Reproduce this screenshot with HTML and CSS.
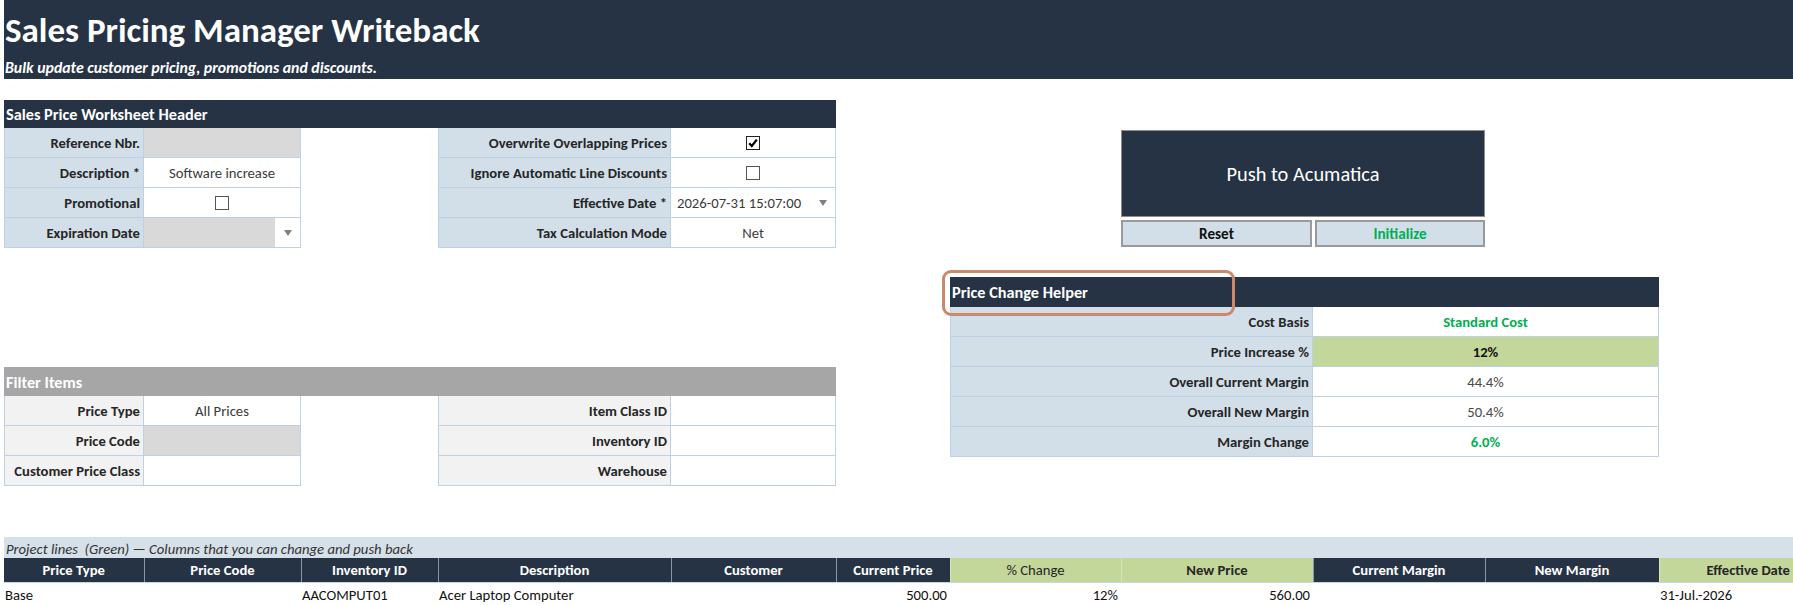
FILE: index.html
```html
<!DOCTYPE html>
<html lang="en">
<head>
<meta charset="UTF-8">
<title>Sales Pricing Manager Writeback</title>
<link rel="stylesheet" href="styles.css">
</head>
<body>
<div class="banner">
    <h1>Sales Pricing Manager Writeback</h1>
    <p>Bulk update customer pricing, promotions and discounts.</p>
</div>

<div class="main">
    <div class="left">
        <div class="section">
            <div class="bar">Sales Price Worksheet Header</div>
            <div class="form">
                <div class="lbl">Reference Nbr.</div>
                <div class="val grey"></div>
                <div class="gap"></div>
                <div class="lbl">Overwrite Overlapping Prices</div>
                <div class="val">
                    <svg class="chk" width="14" height="14" viewBox="0 0 14 14"><rect x="0.5" y="0.5" width="13" height="13" fill="#fff" stroke="#222"/><path d="M3.2 7.2 L5.8 10 L10.8 3.6" fill="none" stroke="#000" stroke-width="2.2"/></svg>
                </div>

                <div class="lbl">Description *</div>
                <div class="val">Software increase</div>
                <div class="gap"></div>
                <div class="lbl">Ignore Automatic Line Discounts</div>
                <div class="val">
                    <svg class="chk" width="14" height="14" viewBox="0 0 14 14"><rect x="0.5" y="0.5" width="13" height="13" fill="#fff" stroke="#555"/></svg>
                </div>

                <div class="lbl">Promotional</div>
                <div class="val">
                    <svg class="chk" width="14" height="14" viewBox="0 0 14 14"><rect x="0.5" y="0.5" width="13" height="13" fill="#fff" stroke="#555"/></svg>
                </div>
                <div class="gap"></div>
                <div class="lbl">Effective Date *</div>
                <div class="val picker">
                    <span class="pick-text">2026-07-31 15:07:00</span>
                    <span class="drop"><i class="arrow"></i></span>
                </div>

                <div class="lbl">Expiration Date</div>
                <div class="val picker">
                    <span class="pick-text grey"></span>
                    <span class="drop"><i class="arrow"></i></span>
                </div>
                <div class="gap"></div>
                <div class="lbl">Tax Calculation Mode</div>
                <div class="val">Net</div>
            </div>
        </div>

        <div class="section filter">
            <div class="bar">Filter Items</div>
            <div class="form">
                <div class="lbl">Price Type</div>
                <div class="val">All Prices</div>
                <div class="gap"></div>
                <div class="lbl">Item Class ID</div>
                <div class="val"></div>

                <div class="lbl">Price Code</div>
                <div class="val grey"></div>
                <div class="gap"></div>
                <div class="lbl">Inventory ID</div>
                <div class="val"></div>

                <div class="lbl">Customer Price Class</div>
                <div class="val"></div>
                <div class="gap"></div>
                <div class="lbl">Warehouse</div>
                <div class="val"></div>
            </div>
        </div>
    </div>

    <div class="right">
        <div class="actions">
            <div class="push">Push to Acumatica</div>
            <div class="btn-row">
                <div class="btn reset">Reset</div>
                <div class="btn init">Initialize</div>
            </div>
        </div>

        <div class="helper">
            <div class="bar">Price Change Helper</div>
            <div class="hrow"><div class="hlbl">Cost Basis</div><div class="hval good">Standard Cost</div></div>
            <div class="hrow"><div class="hlbl">Price Increase %</div><div class="hval input">12%</div></div>
            <div class="hrow"><div class="hlbl">Overall Current Margin</div><div class="hval">44.4%</div></div>
            <div class="hrow"><div class="hlbl">Overall New Margin</div><div class="hval">50.4%</div></div>
            <div class="hrow"><div class="hlbl">Margin Change</div><div class="hval good">6.0%</div></div>
            <div class="callout"></div>
        </div>
    </div>
</div>

<div class="lines-note">Project lines&nbsp; (Green) — Columns that you can change and push back</div>
<table class="lines">
    <colgroup>
        <col style="width:140px"><col style="width:157px"><col style="width:137px"><col style="width:233px">
        <col style="width:165px"><col style="width:114px"><col style="width:171px"><col style="width:192px">
        <col style="width:172px"><col style="width:174px"><col>
    </colgroup>
    <thead>
        <tr>
            <th>Price Type</th>
            <th>Price Code</th>
            <th>Inventory ID</th>
            <th>Description</th>
            <th>Customer</th>
            <th>Current Price</th>
            <th class="edit plain">% Change</th>
            <th class="edit">New Price</th>
            <th>Current Margin</th>
            <th>New Margin</th>
            <th class="edit right-al">Effective Date</th>
        </tr>
    </thead>
    <tbody>
        <tr>
            <td>Base</td>
            <td></td>
            <td>AACOMPUT01</td>
            <td>Acer Laptop Computer</td>
            <td></td>
            <td class="num">500.00</td>
            <td class="num">12%</td>
            <td class="num">560.00</td>
            <td></td>
            <td></td>
            <td>31-Jul.-2026</td>
        </tr>
    </tbody>
</table>
</body>
</html>
```

FILE: styles.css
```css
body {
    margin: 0;
    padding: 0 0 0 4px;
    font-family: Carlito, Calibri, Lato, "Noto Sans", sans-serif;
    font-size: 14.67px;
    color: #262626;
    background: #ffffff;
    overflow: hidden;
}

/* top banner */
.banner {
    background: #263345;
    color: #ffffff;
    height: 79px;
    padding-left: 1px;
    box-sizing: border-box;
}
.banner h1 {
    margin: 0;
    padding-top: 12px;
    font-size: 35px;
    line-height: 36px;
    font-weight: bold;
}
.banner p {
    margin: 12px 0 0;
    font-size: 15.8px;
    line-height: 16px;
    font-style: italic;
    font-weight: bold;
}

.main {
    display: flex;
    height: 458px;
}
.left {
    width: 832px;
    padding-top: 21px;
}
.right {
    margin-left: 114px;
}

/* section bars */
.bar {
    background: #263345;
    color: #ffffff;
    font-weight: bold;
    font-size: 16.3px;
    height: 28px;
    line-height: 29px;
    padding-left: 2px;
}
.filter {
    margin-top: 119px;
}
.filter .bar {
    background: #a6a6a6;
    height: 29px;
    line-height: 30px;
}

.form {
    display: grid;
    grid-template-columns: 140px 157px 137px 233px 165px;
    grid-auto-rows: 30px;
}
.lbl, .val {
    box-sizing: border-box;
    display: flex;
    align-items: center;
    border-bottom: 1px solid #bdd1e6;
    border-right: 1px solid #bdd1e6;
}
.lbl {
    justify-content: flex-end;
    padding-right: 3px;
    background: #d2dfe8;
    border-left: 1px solid #bdd1e6;
    font-weight: bold;
}
.filter .lbl {
    background: #f2f2f2;
}
.val {
    justify-content: center;
    background: #ffffff;
    color: #3a3a3a;
}
.grey {
    background: #d9d9d9;
}
.picker {
    justify-content: flex-start;
    align-items: stretch;
}
.pick-text {
    flex: 1;
    display: flex;
    align-items: center;
    padding-left: 6px;
}
.drop {
    width: 25px;
    display: flex;
    align-items: center;
    justify-content: center;
    background: #ffffff;
}
.arrow {
    width: 0;
    height: 0;
    border-left: 4.5px solid transparent;
    border-right: 4.5px solid transparent;
    border-top: 6px solid #808080;
}

/* buttons */
.actions {
    margin: 51px 0 0 171px;
    width: 364px;
}
.push {
    height: 87px;
    box-sizing: border-box;
    background: #263345;
    border: 1px solid #8c8c8c;
    color: #ffffff;
    font-size: 20.4px;
    display: flex;
    align-items: center;
    justify-content: center;
}
.btn-row {
    display: flex;
    gap: 3px;
    margin-top: 3px;
}
.btn {
    height: 27px;
    box-sizing: border-box;
    background: #d2dfe8;
    border: 2px solid #9a9a9a;
    font-weight: bold;
    font-size: 15.2px;
    display: flex;
    align-items: center;
    justify-content: center;
}
.reset { width: 191px; color: #111111; }
.init { width: 170px; color: #00b050; }

/* helper */
.helper {
    position: relative;
    margin-top: 30px;
    width: 709px;
}
.helper .bar {
    height: 30px;
    line-height: 31px;
}
.hrow {
    display: flex;
    height: 30px;
}
.hlbl, .hval {
    box-sizing: border-box;
    display: flex;
    align-items: center;
    border-bottom: 1px solid #bdd1e6;
    border-right: 1px solid #bdd1e6;
}
.hlbl {
    width: 363px;
    justify-content: flex-end;
    padding-right: 3px;
    background: #d2dfe8;
    border-left: 1px solid #bdd1e6;
    font-weight: bold;
}
.hval {
    width: 346px;
    justify-content: center;
    color: #4a4a4a;
}
.hval.good {
    color: #00b050;
    font-weight: bold;
}
.hval.input {
    background: #c4d79b;
    color: #111111;
    font-weight: bold;
}
.callout {
    position: absolute;
    left: -8px;
    top: -7px;
    width: 293px;
    height: 46px;
    box-sizing: border-box;
    border: 3px solid #c9896b;
    border-radius: 9px;
}

/* project lines */
.lines-note {
    height: 21px;
    line-height: 24px;
    background: #d5e0e8;
    font-style: italic;
    padding-left: 2px;
    color: #333333;
    overflow: hidden;
}
.lines {
    border-collapse: collapse;
    table-layout: fixed;
    width: 1789px;
}
.lines th {
    height: 24px;
    padding: 0 3px;
    background: #263345;
    color: #ffffff;
    font-weight: bold;
    border-left: 1px solid #8497b0;
    border-bottom: 1px solid #c9d6e3;
    text-align: center;
    white-space: nowrap;
}
.lines th:first-child {
    border-left: none;
}
.lines th.right-al {
    text-align: right;
}
.lines th.edit {
    background: #c4d79b;
    color: #262626;
    border-left: 1px solid #d8e4bc;
}
.lines th.plain {
    font-weight: normal;
}
.lines td {
    height: 23px;
    padding: 0 3px 0 1px;
    color: #111111;
    white-space: nowrap;
}
.lines td.num {
    text-align: right;
}
```
